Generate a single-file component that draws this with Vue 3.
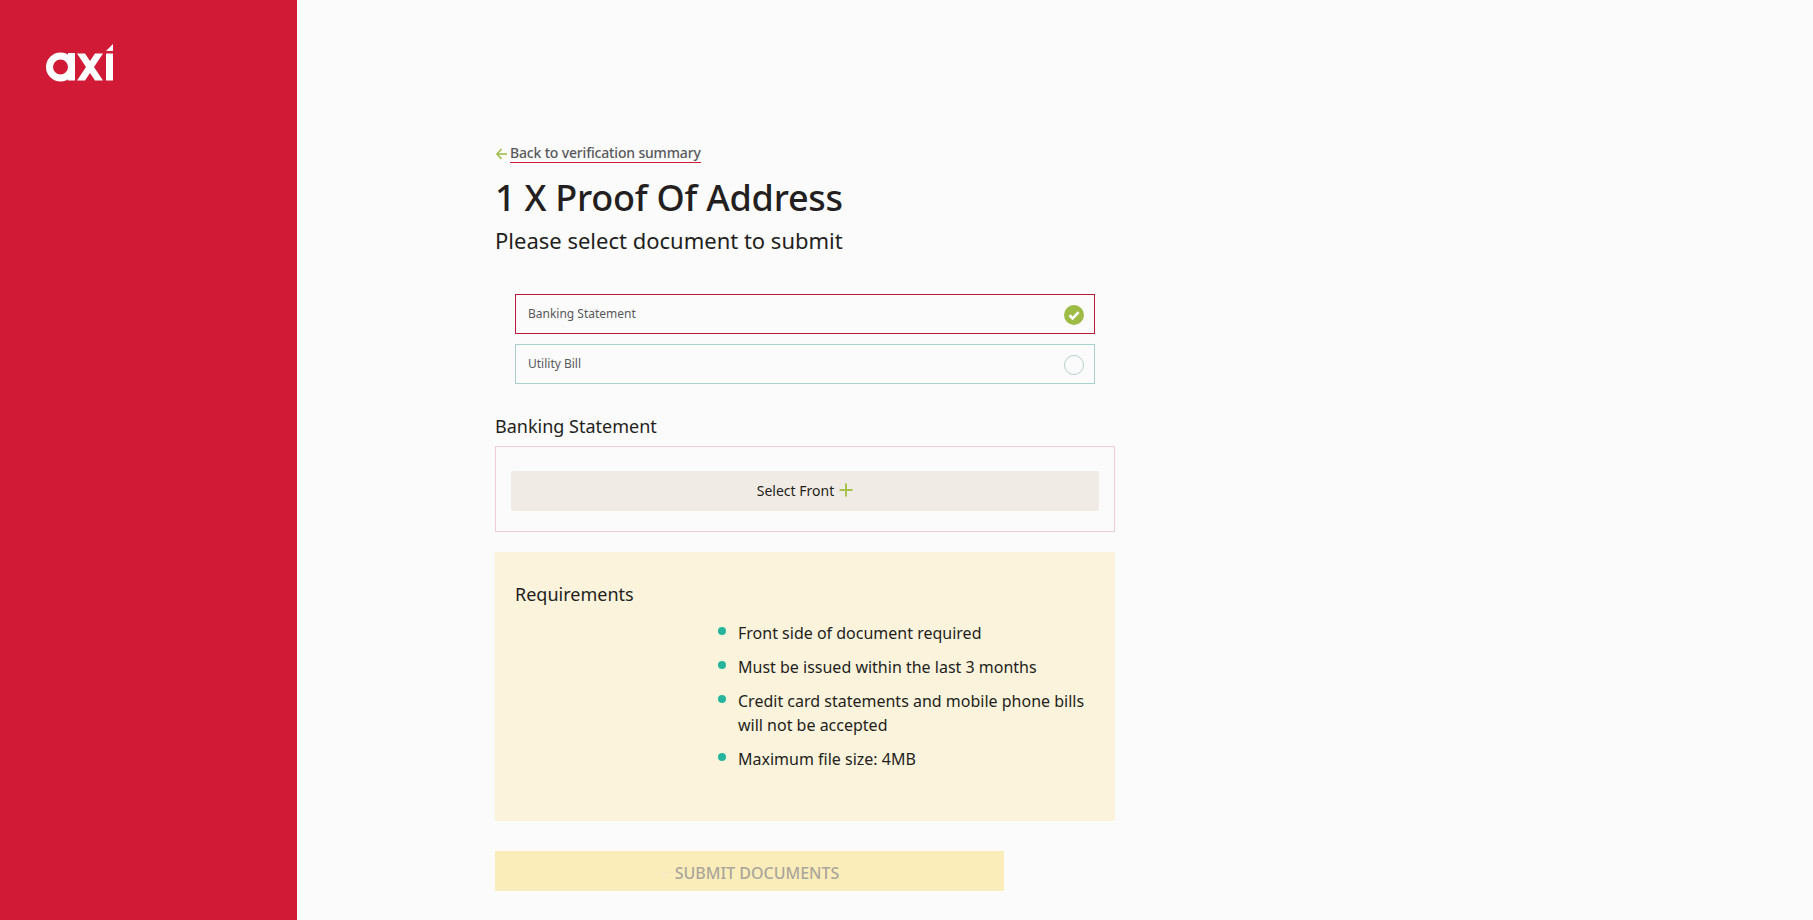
<script setup>
const options = [
  { label: 'Banking Statement', selected: true },
  { label: 'Utility Bill', selected: false },
]
const requirements = [
  'Front side of document required',
  'Must be issued within the last 3 months',
  'Credit card statements and mobile phone bills will not be accepted',
  'Maximum file size: 4MB',
]
</script>

<template>
  <div class="page">
    <aside class="sidebar">
      <svg class="logo" width="68" height="38" viewBox="0 0 68 38" aria-label="axi">
        <circle cx="14.5" cy="23" r="11" fill="none" stroke="#fff" stroke-width="7" />
        <rect x="22" y="9" width="7" height="27.5" fill="#fff" />
        <path d="M31 36.5 L40 23 L31 9.5 H39 L44 17 L49 9.5 H57 L48 23 L57 36.5 H49 L44 29 L39 36.5 Z" fill="#fff" />
        <rect x="60" y="9.500" width="7" height="27" fill="#fff" />
        <path d="M60 7 L67 0 V7 Z" fill="#fff" />
      </svg>
    </aside>
    <main class="main">
      <div class="content">
        <a class="back">
          <svg class="back-arrow" width="13" height="12" viewBox="0 0 13 12">
            <path d="M12 6 H2 M6.500 1 L2 6 L6.500 11" fill="none" stroke="#9dbb45" stroke-width="1.500" />
          </svg>
          <span class="back-text">Back to verification summary</span>
        </a>
        <h1 class="title">1 X Proof Of Address</h1>
        <p class="subtitle">Please select document to submit</p>

        <div class="options">
          <div v-for="o in options" :key="o.label" class="option" :class="{ selected: o.selected }">
            <span class="option-label">{{ o.label }}</span>
            <svg class="option-mark" v-if="o.selected" width="20" height="20" viewBox="0 0 20 20">
              <circle cx="10" cy="10" r="10" fill="#9dbb45" />
              <path d="M5.500 10.300 L8.600 13.300 L14.600 7.200" fill="none" stroke="#fff" stroke-width="2.600" />
            </svg>
            <svg class="option-mark" v-else width="20" height="20" viewBox="0 0 20 20">
              <circle cx="10" cy="10" r="9.500" fill="none" stroke="#b4cfcb" stroke-width="1" />
            </svg>
          </div>
        </div>

        <h2 class="section">Banking Statement</h2>
        <div class="upload">
          <div class="select">
            <span>Select Front</span>
            <svg width="14" height="14" viewBox="0 0 14 14">
              <path d="M7 0.500 V13.500 M0.500 7 H13.500" fill="none" stroke="#a9c24f" stroke-width="2" />
            </svg>
          </div>
        </div>

        <section class="req">
          <h3 class="req-title">Requirements</h3>
          <ul class="req-list">
            <li v-for="r in requirements" :key="r">{{ r }}</li>
          </ul>
        </section>

        <button class="submit" disabled>
          <svg width="13" height="12" viewBox="0 0 13 12">
            <path d="M12 6 H2 M6.500 1.500 L2 6 L6.500 10.500" fill="none" stroke="#f7e9c0" stroke-width="1.300" />
          </svg>
          <span>SUBMIT DOCUMENTS</span>
        </button>
      </div>
    </main>
  </div>
</template>

<style>
html, body { margin: 0; background: #fbfbfb; overflow: hidden; }
</style>

<style scoped>
.page {
  display: flex;
  height: 920px;
  font-family: "Noto Sans", sans-serif;
  color: #231f20;
  background: #fbfbfb;
}
.sidebar {
  width: 297px;
  flex: none;
  background: #d11b36;
  padding: 44px 0 0 46px;
  box-sizing: border-box;
}
.logo { display: block; }
.main { flex: 1; padding: 142px 0 0 198px; }
.content { width: 620px; }
.back {
  display: flex;
  align-items: center;
  gap: 2px;
  height: 22px;
  font-size: 14px;
  font-weight: 500;
  letter-spacing: -0.17px;
  color: #58595b;
}
.back-arrow { margin-top: 2px; }
.back-text { border-bottom: 1px solid #d11b36; line-height: 18px; }
.title {
  margin: 9px 0 0;
  font-size: 36px;
  line-height: 50px;
  font-weight: 500;
  letter-spacing: -0.25px;
}
.subtitle {
  margin: 2px 0 0;
  font-size: 22px;
  line-height: 30px;
}
.options {
  margin: 39px 20px 0;
  display: flex;
  flex-direction: column;
  gap: 10px;
}
.option {
  height: 40px;
  box-sizing: border-box;
  border: 1px solid #a9d0c9;
  padding: 0 10px 0 12px;
  display: flex;
  align-items: center;
  justify-content: space-between;
  font-size: 12px;
  color: #58595b;
}
.option-label { margin-bottom: 2px; }
.option-mark { margin-top: 1px; }
.option.selected { border-color: #bd1a3a; }
.section {
  margin: 30px 0 0;
  font-size: 18px;
  line-height: 25px;
  font-weight: 400;
}
.upload {
  margin-top: 7px;
  height: 86px;
  box-sizing: border-box;
  border: 1px solid #f0cdd6;
  padding: 24px 15px;
}
.select {
  height: 40px;
  box-sizing: border-box;
  padding-bottom: 2px;
  border-radius: 3px;
  background: #f0ebe4;
  display: flex;
  align-items: center;
  justify-content: center;
  gap: 5px;
  font-size: 14px;
}
.req {
  margin-top: 20px;
  height: 269px;
  box-sizing: border-box;
  padding: 30px 20px 0;
  background: #fbf3dc;
}
.req-title {
  margin: 0;
  font-size: 18px;
  line-height: 25px;
  font-weight: 400;
}
.req-list {
  margin: 14px 0 0;
  padding: 0 0 0 223px;
  list-style: none;
  font-size: 16px;
  line-height: 24px;
}
.req-list li { position: relative; margin-bottom: 10px; }
.req-list li::before {
  content: "";
  position: absolute;
  left: -20px;
  top: 6px;
  width: 8px;
  height: 8px;
  border-radius: 50%;
  background: #26b59c;
}
.submit {
  margin-top: 30px;
  width: 509px;
  height: 40px;
  border: 0;
  background: #fbedb9;
  display: flex;
  align-items: center;
  justify-content: center;
  gap: 2px;
  font: 500 16px "Noto Sans", sans-serif;
  color: #aaa69a;
  padding: 3px 0 0;
}
</style>
